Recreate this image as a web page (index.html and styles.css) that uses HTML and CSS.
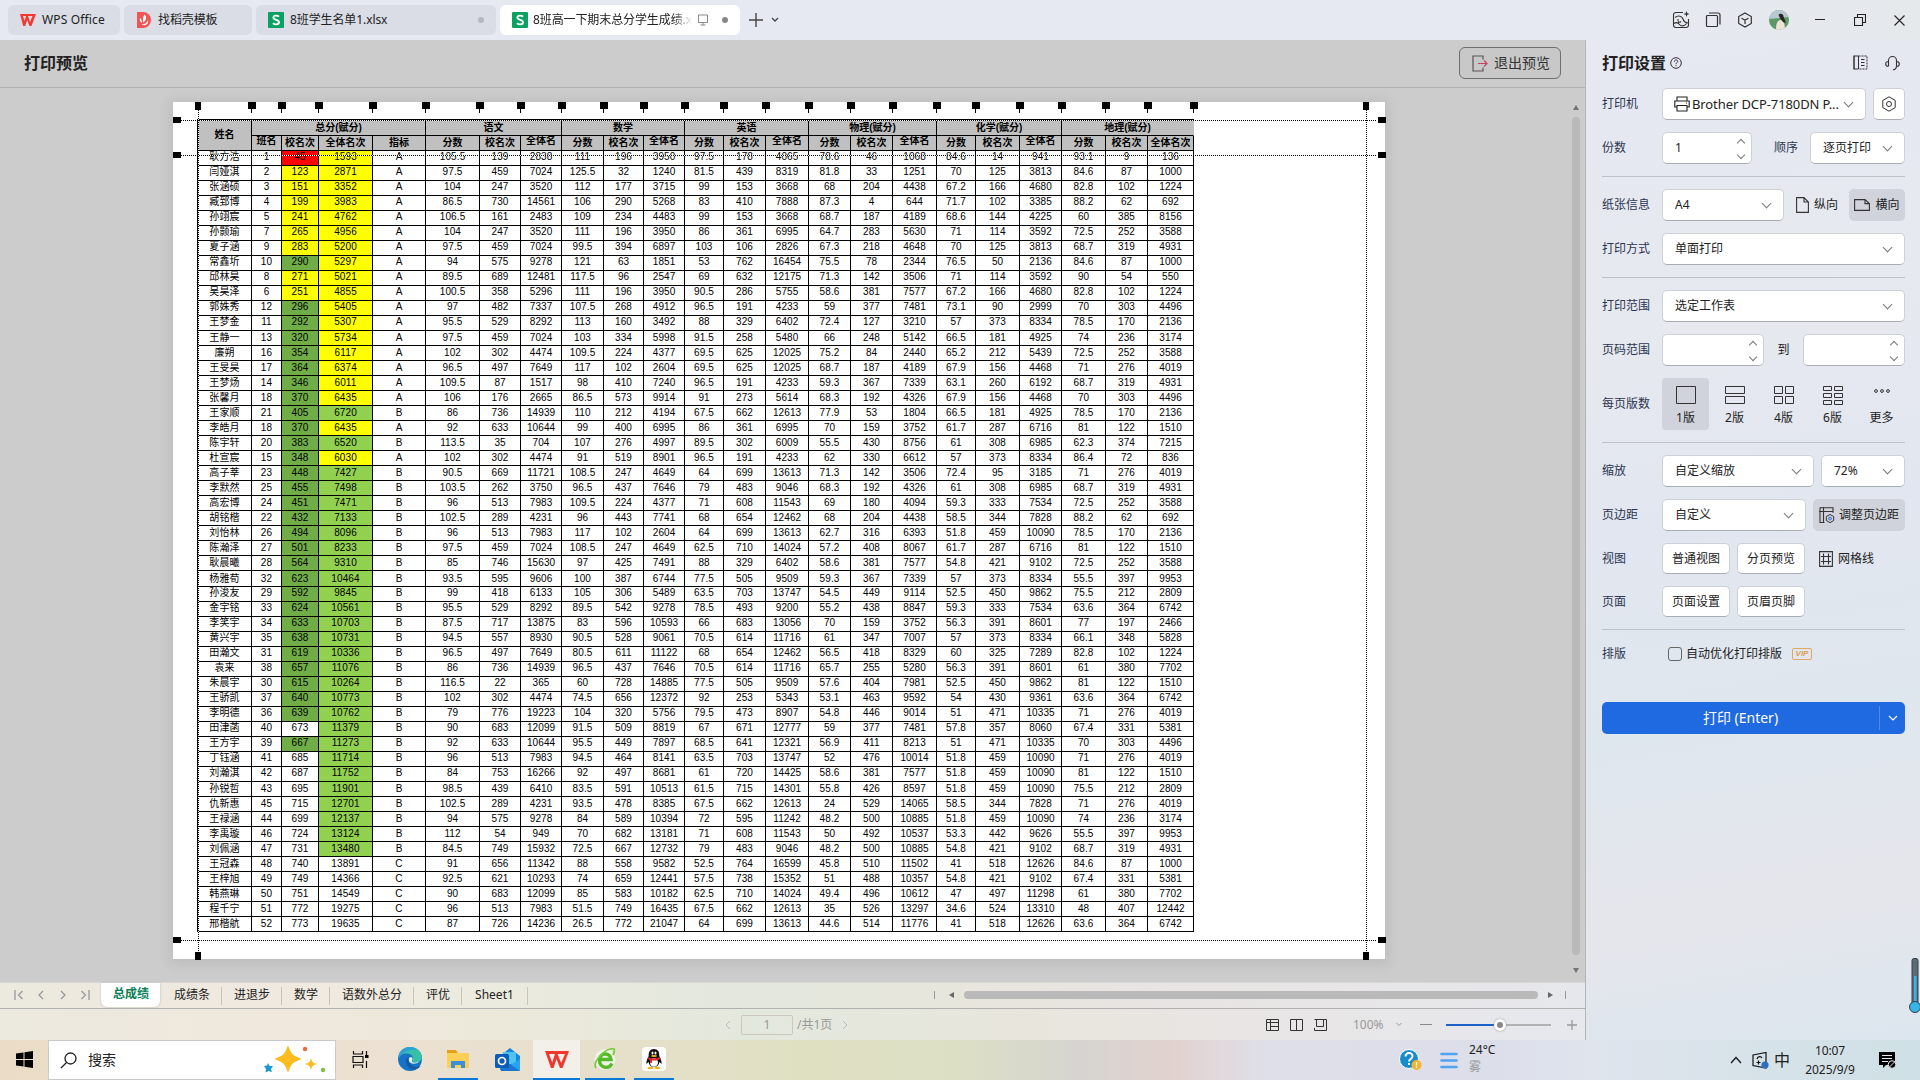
FILE: index.html
```html
<!DOCTYPE html>
<html lang="zh-CN">
<head>
<meta charset="utf-8">
<title>打印预览</title>
<link rel="stylesheet" href="styles.css">
</head>
<body>
<div class="app">
  <header class="titlebar">
    <nav class="doc-tabs">
      <div class="doc-tab tab-home"><svg width="16" height="16" viewBox="0 0 16 16"><path d="M0 2h16l-4.500 12h-2L7.200 8l-2 6h-2L0 2zm3 2l1.500 5L6 4zm5 0l2 6 2.500-6z" fill="#f5392f"/></svg><span>WPS Office</span></div>
      <div class="doc-tab tab-tpl"><svg width="14" height="16" viewBox="0 0 14 16"><path d="M0 0h6a8 8 0 010 16H0z" fill="#f15454"/><path d="M7.500 2.500c2.500 2.500 2 6-1.500 8 0-3-.5-5 1.500-8zM3 6c1.500 1 2 2.500 2 5C3 10 2.500 8 3 6zM4 12c3 1 6-1 7-4 1 4-3 7-7 4z" fill="#fff"/></svg><span>找稻壳模板</span></div>
      <div class="doc-tab tab-doc"><svg width="16" height="16" viewBox="0 0 16 16"><rect width="16" height="16" rx="1" fill="#0ba162"/><path d="M11 4.700C9.500 3 5.400 3.200 5.400 5.600 5.400 8.600 11 7.300 11 10.300 11 13 6.500 13 5 11.200" fill="none" stroke="#fff" stroke-width="1.800"/></svg><span class="doc-name">8班学生名单1.xlsx</span><i class="dot"></i></div>
      <div class="doc-tab tab-doc active"><svg width="16" height="16" viewBox="0 0 16 16"><rect width="16" height="16" rx="1" fill="#0ba162"/><path d="M11 4.700C9.500 3 5.400 3.200 5.400 5.600 5.400 8.600 11 7.300 11 10.300 11 13 6.500 13 5 11.200" fill="none" stroke="#fff" stroke-width="1.800"/></svg><span class="doc-name fade">8班高一下期末总分学生成绩.x</span><svg class="monitor" width="12" height="12" viewBox="0 0 12 12"><path d="M1.500 1h9v7.500h-9zM6 8.500V11M3.500 11h5" fill="none" stroke="#888"/></svg><i class="dot dark"></i></div>
      <svg class="plus" width="14" height="14" viewBox="0 0 14 14"><path d="M7 0v14M0 7h14" stroke="#444" stroke-width="1.400"/></svg>
      <svg class="more-tabs" width="8" height="6" viewBox="0 0 8 6"><path d="M1 1l3 3 3-3" fill="none" stroke="#444" stroke-width="1.300"/></svg>
    </nav>
    <div class="win-icons">
      <svg width="18" height="18" viewBox="0 0 18 18"><path d="M11 1.500H4A2.500 2.500 0 001.500 4v10A2.500 2.500 0 004 16.500h10a2.500 2.500 0 002.500-2.500V8M3 6.500C6 4 10 5 11 8c.5 2 2 3.500 5 4M2 12.500c2-1.500 4-1 5.500 1s5 2 7-1M5 9h2M9 10.500c-1 1-2 1-3 0" fill="none" stroke="#333" stroke-width="1.100"/><path d="M14.500 0l.8 2.200L17.500 3l-2.200.8-.8 2.200-.8-2.200L11.500 3l2.200-.8z" fill="#333"/></svg>
      <svg width="16" height="16" viewBox="0 0 16 16"><path d="M1.500 4.500a1 1 0 011-1h9a1 1 0 011 1v9a1 1 0 01-1 1h-9a1 1 0 01-1-1zM4 1h9a2 2 0 012 2v9.500" fill="none" stroke="#333" stroke-width="1.200"/></svg>
      <svg width="16" height="16" viewBox="0 0 16 16"><path d="M8 1l6.300 3.500v7L8 15l-6.300-3.500v-7zM4.500 6.200L8 8.100l3.500-1.900M8 8v4" fill="none" stroke="#333" stroke-width="1.200"/></svg>
      <svg width="20" height="20" viewBox="0 0 20 20"><defs><clipPath id="av"><circle cx="10" cy="10" r="10"/></clipPath></defs><g clip-path="url(#av)"><path d="M0 0h20v20H0z" fill="#5b9a65"/><path d="M0 0h20v7L0 9z" fill="#b8c8d2"/><path d="M7 20c0-6 1-9 4-10 3 0 5 3 5 10z" fill="#efe3d8"/><path d="M9.500 5c1-2 5-2 5 1.500l2.500 6.500-3-1-3-4z" fill="#2b2522"/></g></svg>
      <svg width="10" height="16" viewBox="0 0 10 16"><path d="M0 7.500h10" stroke="#222"/></svg>
      <svg width="12" height="12" viewBox="0 0 12 12"><path d="M.5 3.500h8v8h-8zM3.500 3.500v-3h8v8h-3" fill="none" stroke="#222" stroke-width="1.100"/></svg>
      <svg width="11" height="11" viewBox="0 0 11 11"><path d="M.5.500l10 10M10.500.500l-10 10" stroke="#222" stroke-width="1.100"/></svg>
    </div>
  </header>

  <div class="work">
    <main class="preview">
      <div class="preview-head">
        <h1>打印预览</h1>
        <button class="exit"><svg width="16" height="17" viewBox="0 0 16 17"><path d="M11 4.500V1H1v15h10v-3.500" fill="none" stroke="#555" stroke-width="1.200"/><path d="M6 8.500h9M12 5.500l3 3-3 3" fill="none" stroke="#c9405c" stroke-width="1.200"/></svg>退出预览</button>
      </div>
      <div class="canvas">
        <div class="sheet" id="sheet">
          <table class="scores">
            <colgroup id="cols"></colgroup>
            <thead>
              <tr class="groups"><th rowspan="2">姓名</th><th colspan="4">总分(赋分)</th><th colspan="3">语文</th><th colspan="3">数学</th><th colspan="3">英语</th><th colspan="3">物理(赋分)</th><th colspan="3">化学(赋分)</th><th colspan="3" class="open">地理(赋分)</th></tr>
              <tr><th class="up">班名</th><th>校名次</th><th>全体名次</th><th>指标</th><th>分数</th><th>校名次</th><th class="up">全体名</th><th>分数</th><th>校名次</th><th class="up">全体名</th><th>分数</th><th>校名次</th><th class="up">全体名</th><th>分数</th><th>校名次</th><th class="up">全体名</th><th>分数</th><th>校名次</th><th class="up">全体名</th><th>分数</th><th>校名次</th><th>全体名次</th></tr>
            </thead>
            <tbody id="rows"></tbody>
          </table>
          <i class="guide h g-top"></i><i class="guide h g-head"></i><i class="guide h g-bottom"></i>
          <i class="guide v g-left"></i><i class="guide v g-right"></i>
        </div>
        <div class="vscroll"><i class="arr up-arr"></i><i class="vthumb"></i><i class="arr down-arr"></i></div>
      </div>
      <div class="sheetbar">
        <div class="sheet-nav">
          <svg width="10" height="10" viewBox="0 0 10 10"><path d="M1 0v10M8.500 1L4.500 5l4 4"/></svg>
          <svg width="10" height="10" viewBox="0 0 10 10"><path d="M7 1L3 5l4 4"/></svg>
          <svg width="10" height="10" viewBox="0 0 10 10"><path d="M3 1l4 4-4 4"/></svg>
          <svg width="10" height="10" viewBox="0 0 10 10"><path d="M9 0v10M1.500 1l4 4-4 4"/></svg>
        </div>
        <span class="stab on">总成绩</span><span class="stab">成绩条</span><span class="stab">进退步</span><span class="stab">数学</span><span class="stab">语数外总分</span><span class="stab">评优</span><span class="stab wide">Sheet1</span>
        <div class="hscroll"><i class="tick"></i><i class="arr left-arr"></i><i class="hthumb"></i><i class="arr right-arr"></i><i class="tick"></i></div>
      </div>
      <div class="statusbar">
        <div class="pager"><svg width="6" height="10" viewBox="0 0 6 10"><path d="M5 1L1 5l4 4" fill="none" stroke="#bbb"/></svg><span class="page-no">1</span><span>/共1页</span><svg width="6" height="10" viewBox="0 0 6 10"><path d="M1 1l4 4-4 4" fill="none" stroke="#bbb"/></svg></div>
        <div class="views">
          <svg width="13" height="12" viewBox="0 0 13 12"><path d="M.5.500h12v11H.5zM.5 3.500h12M4.500 .5v11M4.500 7.500h8" fill="none" stroke="#333"/></svg>
          <svg width="13" height="12" viewBox="0 0 13 12"><path d="M.5.500h12v11H.5zM6.500.500v11M5 .5h3" fill="none" stroke="#333"/></svg>
          <svg width="13" height="12" viewBox="0 0 13 12"><path d="M.5.500h12v11H.5M2.500.500v7h7V.5M.5 9v2.500" fill="none" stroke="#333"/></svg>
        </div>
        <div class="zoomer"><span class="pct">100%</span><svg width="6" height="5" viewBox="0 0 6 5"><path d="M.5 1L3 3.500 5.500 1" fill="none" stroke="#999"/></svg><i class="minus"></i><span class="track"><i class="fill"></i><i class="knob"></i></span><svg width="10" height="10" viewBox="0 0 10 10"><path d="M5 0v10M0 5h10" stroke="#999" stroke-width="1.300"/></svg></div>
      </div>
    </main>

    <aside class="settings">
      <div class="set-head"><h2>打印设置</h2><svg width="12" height="12" viewBox="0 0 12 12"><circle cx="6" cy="6" r="5.300" fill="none" stroke="#333"/><path d="M4.400 4.700c0-2.200 3.300-2.200 3.300-.2C7.700 5.800 6 5.700 6 7.100M6 8.200v1" fill="none" stroke="#333"/></svg>
        <span class="set-tools"><svg width="15" height="15" viewBox="0 0 15 15"><path d="M5.500 1H1v13h4.500zM1 .5v14" fill="none" stroke="#333"/><path d="M5.500 1H14v13H5.500" fill="none" stroke="#333" stroke-dasharray="2 1"/><path d="M8 4.500h3.500M8 7.500h3.500M8 10.500h3.500" stroke="#333"/></svg><svg width="15" height="16" viewBox="0 0 15 16"><path d="M3.500 11V5.500a4 4 0 018 0v5.500c0 2-1 3.500-3.500 4M3.500 6.500C1.500 6.500.7 7.500.7 9s.8 2.500 2.800 2.500M11.500 6.500c2 0 2.800 1 2.800 2.500s-.8 2.500-2.800 2.500" fill="none" stroke="#333" stroke-width="1.100"/></svg></span></div>
      <div class="row"><label>打印机</label><div class="box select grow printer"><svg class="lead" width="16" height="16" viewBox="0 0 16 16"><path d="M3 5V1h10v4M3 11H.8V5h14.400v6H13M3 9.500h10V15H3zM12 7h1" fill="none" stroke="#222" stroke-width="1.100"/></svg><span>Brother DCP-7180DN P...</span><i class="chev"></i></div><div class="box gear"><svg width="16" height="16" viewBox="0 0 16 16"><path d="M8 .8l6.200 3.600v7.200L8 15.200l-6.200-3.600V4.400z" fill="none" stroke="#333"/><circle cx="8" cy="8" r="2.500" fill="none" stroke="#333"/></svg></div></div>
      <div class="row last"><label>份数</label><div class="box w89 spin-box"><span>1</span><i class="spin"></i></div><label class="mid order">顺序</label><div class="box select w95"><span>逐页打印</span><i class="chev"></i></div></div>
      <hr>
      <div class="row"><label>纸张信息</label><div class="box select w121"><span>A4</span><i class="chev"></i></div><span class="flat portrait"><svg width="13" height="16" viewBox="0 0 13 16"><path d="M.6.600h7.400l4.400 4.400v10.400H.6zM8 .6V5h4.400" fill="none" stroke="#333" stroke-width="1.100"/></svg>纵向</span><span class="flat sel w56"><svg width="16" height="12" viewBox="0 0 16 12"><path d="M.6.600h10.400l4.400 4v6.800H.6zM11 .6v4h4.400" fill="none" stroke="#333" stroke-width="1.100"/></svg>横向</span></div>
      <div class="row last"><label>打印方式</label><div class="box select grow"><span>单面打印</span><i class="chev"></i></div></div>
      <hr>
      <div class="row"><label>打印范围</label><div class="box select grow"><span>选定工作表</span><i class="chev"></i></div></div>
      <div class="row"><label>页码范围</label><div class="box w102 spin-box"><i class="spin"></i></div><label class="mid to">到</label><div class="box w102 spin-box"><i class="spin"></i></div></div>
      <div class="row tall last"><label>每页版数</label>
        <div class="ups">
          <span class="up-opt sel"><svg width="20" height="20" viewBox="0 0 20 20"><path d="M.5 1.500h19v17H.5z"/></svg>1版</span>
          <span class="up-opt"><svg width="20" height="20" viewBox="0 0 20 20"><path d="M.5 1.500h19v7H.5zM.5 11.500h19v7H.5z"/></svg>2版</span>
          <span class="up-opt"><svg width="20" height="20" viewBox="0 0 20 20"><path d="M.5 1.500h8v7h-8zM11.500 1.500h8v7h-8zM.5 11.500h8v7h-8zM11.500 11.500h8v7h-8z"/></svg>4版</span>
          <span class="up-opt"><svg width="20" height="20" viewBox="0 0 20 20"><path d="M.5 1.500h8v4h-8zM11.500 1.500h8v4h-8zM.5 8.500h8v4h-8zM11.500 8.500h8v4h-8zM.5 15.500h8v4h-8zM11.500 15.500h8v4h-8z"/></svg>6版</span>
          <span class="up-opt dots"><svg width="20" height="20" viewBox="0 0 20 20"><circle cx="4" cy="6" r="1.400"/><circle cx="10" cy="6" r="1.400"/><circle cx="16" cy="6" r="1.400"/></svg>更多</span>
        </div></div>
      <hr>
      <div class="row"><label>缩放</label><div class="box select grow"><span>自定义缩放</span><i class="chev"></i></div><div class="box select w84"><span>72%</span><i class="chev"></i></div></div>
      <div class="row"><label>页边距</label><div class="box select grow"><span>自定义</span><i class="chev"></i></div><span class="flat sel w92"><svg width="16" height="16" viewBox="0 0 16 16"><path d="M1 .5v15h4.500M1 .8h13v5M4.500 0v16M0 4.500h14" fill="none" stroke="#333" stroke-width="1.100"/><path d="M11 7.500l3.700 2v4L11 15.700l-3.700-2.200v-4z" fill="#cfd3db" stroke="#333"/><circle cx="11" cy="11.600" r="1.500" fill="#8ba6ee" stroke="#3b62c4" stroke-width=".7"/></svg>调整页边距</span></div>
      <div class="row short"><label>视图</label><div class="box btn">普通视图</div><div class="box btn">分页预览</div><span class="flat gridline"><svg width="14" height="16" viewBox="0 0 14 16"><path d="M.6.600h12.800v14.800H.6zM4.500 2.500v11M9.500 2.500v11M2 5.500h10M2 10.500h10" fill="none" stroke="#333" stroke-width="1.100"/></svg>网格线</span></div>
      <div class="row short last"><label>页面</label><div class="box btn">页面设置</div><div class="box btn">页眉页脚</div></div>
      <hr>
      <div class="row opt"><label>排版</label><i class="check"></i><span>自动优化打印排版</span><b class="vip">VIP</b></div>
      <button class="print"><span>打印 (Enter)</span><i class="split"><svg width="10" height="6" viewBox="0 0 10 6"><path d="M1 1l4 4 4-4" fill="none" stroke="#fff" stroke-width="1.200"/></svg></i></button>
      <svg class="thermo" width="12" height="56" viewBox="0 0 12 56"><rect x="3" y=".5" width="6" height="46" rx="2" fill="#5c6b78" stroke="#34404a"/><path d="M5 18h2.500v28H5z" fill="#35b4e8"/><circle cx="6" cy="49" r="5.500" fill="#35b4e8" stroke="#34404a"/></svg>
    </aside>
  </div>

  <footer class="taskbar">
    <div class="start"><svg width="17" height="17" viewBox="0 0 17 17"><path d="M0 2.400l7.500-1V8H0zM8.500 1.200L17 0v8H8.500zM0 9h7.500v6.600L0 14.600zM8.500 9H17v8l-8.500-1.200z"/></svg></div>
    <div class="search"><svg width="17" height="17" viewBox="0 0 17 17"><circle cx="10.500" cy="6.500" r="5.500" fill="none" stroke="#222" stroke-width="1.300"/><path d="M6.500 10.500L1 16" stroke="#222" stroke-width="1.300"/></svg><span>搜索</span>
      <svg class="stars" width="62" height="28" viewBox="0 0 62 28"><path d="M24 1c2 7 4.500 10 12 12-7.500 2-10 5-12 12-2-7-4.500-10-12-12 7.500-2 10-5 12-12z" fill="#fdbc1f" stroke="#fdbc1f" stroke-width="1.500" stroke-linejoin="round"/><path d="M47 12c1 4 2 5 6 6-4 1-5 2-6 6-1-4-2-5-6-6 4-1 5-2 6-6z" fill="#fdbc1f"/><path d="M4 17l1.500 3 3.500 0-2 3 1 3-3.500-1-3 1.500 .5-3.500L0 20l3-.5z" fill="#199ad6"/><circle cx="41" cy="3" r="2.200" fill="#e86a3c"/><circle cx="59" cy="24" r="2.200" fill="#7cc04b"/></svg></div>
    <div class="apps">
      <span class="app-ic"><svg width="17" height="17" viewBox="0 0 17 17"><path d="M1.500 0v3h9V0M1 5.500h10v6H1zM1.500 17v-3h9v3M14.500 0v7M14.500 10v7" fill="none" stroke="#111" stroke-width="1.200"/><path d="M13 4h3.500v3H13z"/></svg></span>
      <span class="app-ic"><svg width="24" height="24" viewBox="0 0 24 24"><circle cx="12" cy="12" r="12" fill="#1673c4"/><path d="M0 12C1 4 6 0 12 0c7 0 12 5 12 10 0 4-4 6-8 5.500-2-.3-2-1.500-1-3 .5-4-3-6-6-6C5 6.500 1 8 0 12z" fill="#37bfa8"/><path d="M0 12C1 4 6 0 12 0c3 0 5 1 7 2.500C13 2 4 5 0 12z" fill="#2aa4d8"/><path d="M9 10c-3 5 0 11 6 12.500 3 .5 6-1 7.500-3.500-5 2.500-11 0-11.500-5z" fill="#125aa3"/><path d="M12.500 10c1.500 0 2.500 1 2 2.500-1 1.500-1 2.700 1 3 2 .4 4 0 5.500-1-2 3-9 3-10-.5-.4-1.500 0-4 1.500-4z" fill="#e7efe8"/></svg></span>
      <span class="app-ic run"><svg width="22" height="20" viewBox="0 0 22 20"><path d="M0 1h9l2 3H0z" fill="#e3a21a"/><path d="M0 4h22v15H0z" fill="#fccf57"/><path d="M4 19v-7h14v7h-4v-3H8v3z" fill="#3d8ed8"/></svg></span>
      <span class="app-ic"><svg width="25" height="23" viewBox="0 0 25 23"><path d="M5 8L15 0l10 8v14H5z" fill="#1687dc"/><path d="M8 4h13v12H8z" fill="#4fc3f0"/><path d="M6 23l19-12v11a1 1 0 01-1 1z" fill="#26a4ee"/><path d="M6 10l19 13H6z" fill="#1a76ce"/><rect y="6" width="14" height="14" rx="1.500" fill="#0f5cb8"/><circle cx="7" cy="13" r="3.500" fill="none" stroke="#fff" stroke-width="1.700"/></svg></span>
      <span class="app-ic run cur"><svg width="24" height="17" viewBox="0 0 24 17"><path d="M0 0h24l-6.500 17H15l-3.500-9-3 9H6L0 0zm4 3l3.200 8.500L10 3zm8.500 0l3.700 9L20 3z" fill="#f2362c"/></svg></span>
      <span class="app-ic run"><svg width="22" height="24" viewBox="0 0 22 24"><circle cx="11" cy="12.500" r="10.500" fill="#eef3e6"/><path d="M18 16.500c-3 6-12 5-12.500-3C5.500 5 16.500 5 17 12.500H6" fill="none" stroke="#55b92c" stroke-width="3.400"/><path d="M2 21C-2 15 12 0 20 2c1 2 0 4-1 6" fill="none" stroke="#77cc3b" stroke-width="1.700"/></svg></span>
      <span class="app-ic run"><svg width="24" height="24" viewBox="0 0 24 24"><rect width="24" height="24" rx="4" fill="#fff"/><path d="M12 2c-4 0-5.500 3-5.300 7C5 12 4 15 4.500 17l2-2c.5 3 2.500 5 5.500 5s5-2 5.500-5l2 2c.5-2-.5-5-2.200-8 .2-4-1.300-7-5.300-7z" fill="#111"/><ellipse cx="12" cy="15.500" rx="4" ry="4.300" fill="#fff"/><path d="M6.500 10c3 2 8 2 11 0l.5 2c-3 2-9 2-12 0z" fill="#e8262b"/><path d="M8 12.500h2V16H8z" fill="#e8262b"/><ellipse cx="10.500" cy="6" rx="1" ry="1.500" fill="#fff"/><ellipse cx="13.500" cy="6" rx="1" ry="1.500" fill="#fff"/><ellipse cx="12" cy="9" rx="3" ry="1" fill="#f6b21b"/><ellipse cx="8.500" cy="21" rx="3" ry="1.200" fill="#f6b21b"/><ellipse cx="15.500" cy="21" rx="3" ry="1.200" fill="#f6b21b"/></svg></span>
    </div>
    <div class="weather">
      <svg width="23" height="22" viewBox="0 0 23 22"><circle cx="10" cy="10" r="9.500" fill="#168ccb" stroke="#fff"/><path d="M6.500 7.500c.3-5 7.500-4.500 7 0-.3 2.500-3.500 2.500-3.500 5M10 14v2" fill="none" stroke="#fff" stroke-width="2"/><circle cx="17.500" cy="16" r="5" fill="#f4b32e"/><path d="M17.500 13v3.500M17.500 17.500v1.500" stroke="#fff" stroke-width="1.300"/></svg>
      <svg class="fog" width="18" height="17" viewBox="0 0 18 17"><path d="M1.500 2h15M1.500 8.500h15M1.500 15h15" stroke="#4fa4f2" stroke-width="2.600" stroke-linecap="round"/></svg>
      <div class="deg"><span>24°C</span><span class="sub">雾</span></div>
    </div>
    <div class="tray">
      <svg class="caret" width="12" height="8" viewBox="0 0 12 8"><path d="M1 7l5-5.500L11 7" fill="none" stroke="#111" stroke-width="1.200"/></svg>
      <svg width="17" height="17" viewBox="0 0 17 17"><path d="M1 3l13-2.500V16L1 13.500zM4.500 10.500h4M6.500 8.500v4M5 7c1-3 4-3 5-1" fill="none" stroke="#111" stroke-width="1.200"/><circle cx="13" cy="13" r="3.600" fill="#2c6fbd"/></svg>
      <span class="ime">中</span>
      <div class="clock"><span>10:07</span><span>2025/9/9</span></div>
      <svg class="notif" width="17" height="17" viewBox="0 0 17 17"><path d="M0 0h16v13h-9l-3 3v-3H0z"/><path d="M3 3.500h10M3 6.500h10M3 9.500h6" stroke="#e3ebee"/><circle cx="13" cy="12.500" r="3.800" stroke="#e3ebee"/><path d="M10.500 15l5-5" stroke="#e3ebee"/></svg>
    </div>
  </footer>
</div>
<script src="table.js"></script>
</body>
</html>
```

FILE: styles.css
```css
* { box-sizing: border-box; }
body { margin: 0; overflow: hidden; font: 12px/16px "Noto Sans", "Noto Sans CJK SC", sans-serif; color: #222; }
i { display: block; font-style: normal; }
svg { display: block; flex: none; }
h1, h2 { margin: 0; }
.app { width: 1920px; height: 1080px; display: flex; flex-direction: column; background: #e6e9f1; }

.titlebar { height: 40px; display: flex; justify-content: space-between; padding: 5px 15px 5px 8px; background: linear-gradient(90deg, #e6e9f2 80%, #e5e9ec); }
.doc-tabs { display: flex; gap: 4px; align-items: center; }
.doc-tab { height: 30px; border-radius: 6px; background: #dadde5; display: flex; align-items: center; padding: 0 12px; white-space: nowrap; }
.doc-tab > span { letter-spacing: -.1px; }
.tab-home { width: 112px; gap: 6px; }
.doc-tab.tab-home > span { letter-spacing: .15px; }
.tab-tpl { width: 128px; padding-left: 13px; gap: 7px; }
.tab-doc { width: 240px; gap: 6px; padding-right: 12px; }
.tab-doc.active { background: #fff; gap: 5px; }
.doc-name { flex: 1; min-width: 0; }
.fade { -webkit-mask-image: linear-gradient(90deg, #000 88%, transparent); mask-image: linear-gradient(90deg, #000 88%, transparent); }
.monitor { margin-right: 8px; }
.dot { width: 6px; height: 6px; border-radius: 50%; background: #b4b7bd; }
.dot.dark { background: #888; }
.plus { margin-left: 5px; }
.more-tabs { margin-left: 4px; }
.win-icons { display: flex; align-items: center; }
.win-icons svg:nth-child(2) { margin-left: 15px; }
.win-icons svg:nth-child(3) { margin-left: 16px; }
.win-icons svg:nth-child(4) { margin-left: 16px; }
.win-icons svg:nth-child(5) { margin-left: 26px; }
.win-icons svg:nth-child(6) { margin-left: 29px; }
.win-icons svg:nth-child(7) { margin-left: 28px; }

.work { height: 1000px; display: flex; }
.preview { width: 1586px; flex: none; border-right: 1px solid #b5b5b8; display: flex; flex-direction: column; background: #ccc; }
.preview-head { height: 48px; border-bottom: 1px solid #b1b1b1; display: flex; align-items: center; justify-content: space-between; padding: 0 24px 1px; }
h1 { font-size: 16px; line-height: 20px; font-weight: 600; }
.exit { width: 102px; height: 32px; border: 1px solid #6e6e6e; border-radius: 6px; background: #c8c8c8; display: flex; align-items: center; gap: 6px; padding: 0 0 0 12px; font: 14px/18px "Noto Sans", "Noto Sans CJK SC", sans-serif; color: #333; white-space: nowrap; }
.canvas { height: 895px; display: flex; justify-content: space-between; padding: 14px 5px 0 173px; overflow: hidden; border-bottom: 1px solid #d8d8d8; }
.sheet { position: relative; width: 1212px; height: 857px; padding: 17px 0 0 24px; background: #fff; box-shadow: 0 2px 12px 4px rgba(0,0,0,.07); }
.scores { border-collapse: separate; border-spacing: 0; table-layout: fixed; width: 997px; border-left: 1px solid #000; border-top: 1px solid #000; font: 10px/12px "Liberation Sans", "Noto Sans CJK SC", sans-serif; color: #000; text-align: center; }
.scores th, .scores td { padding: 0; height: 15px; border-right: 1px solid #000; border-bottom: 1px solid #000; white-space: nowrap; overflow: hidden; }
.scores td { letter-spacing: .1px; }
.scores tr.high td { padding-bottom: 2px; }
.scores th { background: silver; font-weight: 700; }
.scores .groups th { height: 16px; }
.scores th.open { border-right-color: silver; }
.scores th.up { line-height: 10px; padding-bottom: 4px; }
.scores tr.taller td { height: 16px; }
.scores td.red { background: #f00; }
.scores td.yellow { background: #ff0; }
.scores td.green { background: #70ad47; }
.scores td.lime { background: #92d050; }
.guide { position: absolute; }
.guide.h { left: 8px; width: 1196px; height: 1px; background: repeating-linear-gradient(90deg, #000 0 1px, #fff 1px 2px); }
.guide.v { top: 8px; width: 1px; height: 842px; background: repeating-linear-gradient(#000 0 1px, #fff 1px 2px); }
.g-top { top: 18px; }
.g-head { top: 53px; }
.g-bottom { top: 838px; }
.g-left { left: 25px; }
.g-right { left: 1193px; }
.grip { position: absolute; background: #000; }
.grip.col { top: 0; width: 8px; height: 7px; }
.grip.col::after { content: ""; position: absolute; left: 3px; top: 7px; width: 1px; height: 4px; background: #000; }
.grip.mv { width: 6px; height: 8px; }
.grip.mh { width: 8px; height: 6px; }
.vscroll { width: 8px; height: 880px; display: flex; flex-direction: column; align-items: center; }
.vthumb { width: 8px; height: 838px; margin: 7px 0 13px; border-radius: 4px; background: #b9b9b9; }
.arr { width: 0; height: 0; border: 3px solid transparent; flex: none; }
.up-arr { margin-top: 3px; border-width: 0 3px 5px; border-bottom-color: #737373; }
.down-arr { border-width: 5px 3px 0; border-top-color: #737373; }
.left-arr { border-width: 3px 5px 3px 0; border-right-color: #666; }
.right-arr { border-width: 3px 0 3px 5px; border-left-color: #666; }

.sheetbar { height: 26px; display: flex; border-bottom: 1px solid #b1b1b1; background: linear-gradient(90deg, #ece9df, #f0e9df 18%, #ecebdf 30%, #e3e7dd 47%, #e7e6dc 60%, #e8e4e2 72%, #e6e7ec); }
.sheet-nav { width: 101px; display: flex; align-items: center; padding: 0 0 2px 14px; gap: 12px; }
.sheet-nav path { fill: none; stroke: #999; stroke-width: 1.300; }
.stab { padding: 3px 11px 0 12px; height: 24px; position: relative; white-space: nowrap; }
.stab:not(.on) { border-right: 1px solid #c8c5bd; height: 18px; margin-top: 4px; padding-top: 0; }
.stab.on { margin-right: 2px; background: #fff; border-radius: 0 0 6px 6px; color: #0a8055; font-weight: 700; box-shadow: 0 0 2px #aaa; }
.stab.wide { padding: 0 13px; }
.hscroll { margin: 0 19px 0 auto; display: flex; align-items: center; width: 632px; padding-bottom: 1px; }
.tick { width: 1px; height: 8px; background: #999; flex: none; }
.hthumb { width: 574px; height: 8px; border-radius: 4px; background: #b9b9b9; flex: none; }
.left-arr { margin: 0 10px 0 14px; }
.right-arr { margin: 0 12px 0 10px; }
.statusbar { height: 31px; display: flex; align-items: center; color: #999; background: linear-gradient(90deg, #ece9df, #f0e8dd 18%, #ece9da 32%, #e3e8dd 47%, #e8e6dc 65%, #e8e5e4 78%, #e6e8ee); }
.pager { display: flex; align-items: center; width: 545px; padding-left: 725px; box-sizing: content-box; flex: none; }
.page-no { width: 52px; height: 20px; margin: 0 4px 0 10px; border: 1px solid #ccc8c0; border-radius: 2px; text-align: center; line-height: 18px; }
.pager svg:last-child { margin-left: 10px; }
.views { display: flex; gap: 11px; margin-left: -4px; width: 87px; flex: none; }
.zoomer { display: flex; align-items: center; flex: none; }
.pct { width: 43px; }
.minus { width: 12px; height: 1px; margin: 0 14px 0 18px; background: #888; }
.track { position: relative; width: 105px; height: 2px; margin-right: 16px; background: #b2b2b4; }
.fill { width: 53px; height: 2px; background: #1d61c8; }
.knob { position: absolute; left: 48px; top: -5px; width: 12px; height: 12px; border: 3px solid #fff; border-radius: 50%; background: #888; box-shadow: 0 0 2px #888; }

.settings { position: relative; flex: 1; padding: 9px 16px 0; display: flex; flex-direction: column; background: linear-gradient(170deg, #e6e8f2, #e6e9ef 28%, #e2e6f0 48%, #dfe7ee 67%, #e5e6ec 85%, #dce6ee); }
.set-head { height: 28px; display: flex; align-items: center; margin-bottom: 11px; }
h2 { font-size: 16px; line-height: 20px; font-weight: 700; margin-right: 4px; }
.set-tools { margin-left: auto; display: flex; gap: 17px; margin-right: 5px; }
.row { display: flex; align-items: center; height: 32px; margin-bottom: 12px; gap: 7px; white-space: nowrap; }
.row > label:first-child { width: 53px; flex: none; color: #2b3550; }
.row.short { height: 31px; }
.row.tall { height: 52px; }
hr { width: 100%; height: 1px; margin: 0 0 12px; border: 0; background: #bfc2c8; flex: none; }
.box { height: 32px; border: 1px solid #cdd0d7; border-bottom-color: #a9acb2; border-radius: 5px; background: #fff; display: flex; align-items: center; padding: 0 12px; flex: none; }
.row.short .box { height: 31px; }
.box > span { flex: 1; }
.box.grow { flex: 1; }
.printer { padding-left: 11px; }
.printer > span { font-size: 13px; letter-spacing: -.1px; white-space: nowrap; margin-left: 2px; }
.chev { width: 7px; height: 7px; margin: -4px 1px 0 0; border: solid #777; border-width: 0 1px 1px 0; transform: rotate(45deg); flex: none; }
.gear { width: 32px; padding: 0 7px; }
.w84 { width: 84px; } .w89 { width: 90px; } .w95 { width: 95px; } .w102 { width: 102px; } .w121 { width: 122px; }
.spin-box { justify-content: flex-end; padding-right: 7px; }
.spin { width: 6px; height: 22px; display: flex; flex-direction: column; justify-content: space-between; align-items: center; }
.spin::before, .spin::after { content: ""; width: 5px; height: 5px; border: solid #777; border-width: 1px 0 0 1px; transform: translateY(3px) rotate(45deg); }
.spin::after { transform: translateY(-1px) rotate(225deg); }
.mid.order { margin-left: auto; margin-right: 5px; color: #2b3550; }
.mid.to { flex: 1; text-align: center; }
.flat { display: flex; align-items: center; height: 32px; gap: 5px; border-radius: 5px; justify-content: center; }
.flat.sel, .up-opt.sel { background: #d0d3db; }
.portrait { flex: 1; justify-content: flex-start; padding-left: 5px; }
.w56 { width: 56px; } .w92 { width: 92px; gap: 4px; }
.ups { display: flex; gap: 2px; }
.up-opt { width: 47px; height: 52px; border-radius: 4px; display: flex; flex-direction: column; align-items: center; padding-top: 7px; gap: 5px; }
.up-opt path, .up-opt circle { fill: none; stroke: #333; }
.btn { width: 68px; padding: 0; justify-content: center; }
.gridline { margin-left: 7px; }
.row.opt { height: 22px; margin-bottom: 37px; margin-top: 1px; }
.row.opt label { margin-right: 6px; }
.check { width: 14px; height: 14px; border: 1px solid #666; border-radius: 3px; }
.row.opt span { margin-left: -3px; }
.vip { width: 20px; height: 12px; margin-left: 3px; border: 1px solid #e0a860; border-radius: 2px; font: italic 700 8px/10px "Liberation Sans", sans-serif; color: #e0a050; text-align: center; }
.print { height: 32px; border: 0; border-radius: 5px; background: #1f6ae0; color: #fff; display: flex; align-items: center; padding: 0; font: 14px/18px "Noto Sans", "Noto Sans CJK SC", sans-serif; }
.print span { flex: 1; }
.split { width: 26px; height: 24px; border-left: 1px solid #4c8cf0; display: flex; align-items: center; justify-content: center; }
.thermo { position: absolute; right: 0; top: 918px; }

.taskbar { height: 40px; display: flex; align-items: stretch; background: linear-gradient(90deg, #eadcc5, #ece1d2 20%, #e7dfcc 30%, #dfe0c2 42%, #dcdfc4 50%, #d6d4d0 56%, #e1d2cf 61%, #dfdfe9 66%, #dcdeea 77%, #dfe4ed 83%, #cee0e5); }
.start { width: 48px; padding: 11px 0 0 16px; flex: none; }
.search { width: 288px; height: 40px; border: 1px solid #c9c9c9; background: #fff; display: flex; align-items: center; padding: 0 9px 0 11px; font-size: 14px; flex: none; }
.search span { margin-left: 11px; flex: 1; }
.apps { display: flex; flex: none; }
.app-ic { width: 49px; display: flex; align-items: center; justify-content: center; border-bottom: 2px solid transparent; flex: none; }
.app-ic.run { width: 40px; margin: 0 5px 0 4px; border-color: #0a78d6; }
.app-ic.cur { width: 47px; margin: 0 1px; background: #f2f0e9; }
.weather { display: flex; align-items: center; margin-left: 720px; }
.fog { margin: 0 11px 0 18px; }
.deg { display: flex; flex-direction: column; line-height: 17px; padding-bottom: 4px; }
.deg .sub { color: #999; }
.tray { display: flex; align-items: center; margin-left: auto; padding-right: 24px; }
.caret { margin-right: 10px; }
.ime { font-size: 16px; margin: 0 13px 0 5px; }
.clock { width: 54px; display: flex; flex-direction: column; align-items: center; line-height: 19px; margin-right: 22px; letter-spacing: -.1px; }
```

FILE: table.js
```js
// 列宽（像素）：姓名、总分四列，其后每科三列
const widths = [54, 30, 37, 54, 53, 54, 41, 41, 42, 40, 41, 39, 42, 43, 42, 42, 44, 39, 44, 42, 44, 42, 46];
const data = `
耿方浩 1 45 1593 A 105.5 139 2838 111 196 3950 97.5 178 4065 78.6 46 1068 84.6 14 941 93.1 9 136
闫娅淇 2 123 2871 A 97.5 459 7024 125.5 32 1240 81.5 439 8319 81.8 33 1251 70 125 3813 84.6 87 1000
张涵硕 3 151 3352 A 104 247 3520 112 177 3715 99 153 3668 68 204 4438 67.2 166 4680 82.8 102 1224
臧郅博 4 199 3983 A 86.5 730 14561 106 290 5268 83 410 7888 87.3 4 644 71.7 102 3385 88.2 62 692
孙翊宸 5 241 4762 A 106.5 161 2483 109 234 4483 99 153 3668 68.7 187 4189 68.6 144 4225 60 385 8156
孙颢瑜 7 265 4956 A 104 247 3520 111 196 3950 86 361 6995 64.7 283 5630 71 114 3592 72.5 252 3588
夏子涵 9 283 5200 A 97.5 459 7024 99.5 394 6897 103 106 2826 67.3 218 4648 70 125 3813 68.7 319 4931
常鑫圻 10 290 5297 A 94 575 9278 121 63 1851 53 762 16454 75.5 78 2344 76.5 50 2136 84.6 87 1000
邱林昊 8 271 5021 A 89.5 689 12481 117.5 96 2547 69 632 12175 71.3 142 3506 71 114 3592 90 54 550
吴昊泽 6 251 4855 A 100.5 358 5296 111 196 3950 90.5 286 5755 58.6 381 7577 67.2 166 4680 82.8 102 1224
郭姝秀 12 296 5405 A 97 482 7337 107.5 268 4912 96.5 191 4233 59 377 7481 73.1 90 2999 70 303 4496
王梦金 11 292 5307 A 95.5 529 8292 113 160 3492 88 329 6402 72.4 127 3210 57 373 8334 78.5 170 2136
王静一 13 320 5734 A 97.5 459 7024 103 334 5998 91.5 258 5480 66 248 5142 66.5 181 4925 74 236 3174
廉朔 16 354 6117 A 102 302 4474 109.5 224 4377 69.5 625 12025 75.2 84 2440 65.2 212 5439 72.5 252 3588
王旻昊 17 364 6374 A 96.5 497 7649 117 102 2604 69.5 625 12025 68.7 187 4189 67.9 156 4468 71 276 4019
王梦炀 14 346 6011 A 109.5 87 1517 98 410 7240 96.5 191 4233 59.3 367 7339 63.1 260 6192 68.7 319 4931
张馨月 18 370 6435 A 106 176 2665 86.5 573 9914 91 273 5614 68.3 192 4326 67.9 156 4468 70 303 4496
王家顺 21 405 6720 B 86 736 14939 110 212 4194 67.5 662 12613 77.9 53 1804 66.5 181 4925 78.5 170 2136
李皓月 18 370 6435 A 92 633 10644 99 400 6995 86 361 6995 70 159 3752 61.7 287 6716 81 122 1510
陈宇轩 20 383 6520 B 113.5 35 704 107 276 4997 89.5 302 6009 55.5 430 8756 61 308 6985 62.3 374 7215
杜宣宸 15 348 6030 A 102 302 4474 91 519 8901 96.5 191 4233 62 330 6612 57 373 8334 86.4 72 836
高子莘 23 448 7427 B 90.5 669 11721 108.5 247 4649 64 699 13613 71.3 142 3506 72.4 95 3185 71 276 4019
李默然 25 455 7498 B 103.5 262 3750 96.5 437 7646 79 483 9046 68.3 192 4326 61 308 6985 68.7 319 4931
高宏博 24 451 7471 B 96 513 7983 109.5 224 4377 71 608 11543 69 180 4094 59.3 333 7534 72.5 252 3588
胡铭楷 22 432 7133 B 102.5 289 4231 96 443 7741 68 654 12462 68 204 4438 58.5 344 7828 88.2 62 692
刘怡林 26 494 8096 B 96 513 7983 117 102 2604 64 699 13613 62.7 316 6393 51.8 459 10090 78.5 170 2136
陈瀚泽 27 501 8233 B 97.5 459 7024 108.5 247 4649 62.5 710 14024 57.2 408 8067 61.7 287 6716 81 122 1510
耿晨曦 28 564 9310 B 85 746 15630 97 425 7491 88 329 6402 58.6 381 7577 54.8 421 9102 72.5 252 3588
杨雅荀 32 623 10464 B 93.5 595 9606 100 387 6744 77.5 505 9509 59.3 367 7339 57 373 8334 55.5 397 9953
孙浚友 29 592 9845 B 99 418 6133 105 306 5489 63.5 703 13747 54.5 449 9114 52.5 450 9862 75.5 212 2809
金宇铭 33 624 10561 B 95.5 529 8292 89.5 542 9278 78.5 493 9200 55.2 438 8847 59.3 333 7534 63.6 364 6742
李笑宇 34 633 10703 B 87.5 717 13875 83 596 10593 66 683 13056 70 159 3752 56.3 391 8601 77 197 2466
黄兴宇 35 638 10731 B 94.5 557 8930 90.5 528 9061 70.5 614 11716 61 347 7007 57 373 8334 66.1 348 5828
田瀚文 31 619 10336 B 96.5 497 7649 80.5 611 11122 68 654 12462 56.5 418 8329 60 325 7289 82.8 102 1224
袁来 38 657 11076 B 86 736 14939 96.5 437 7646 70.5 614 11716 65.7 255 5280 56.3 391 8601 61 380 7702
朱晨宇 30 615 10264 B 116.5 22 365 60 728 14885 77.5 505 9509 57.6 404 7981 52.5 450 9862 81 122 1510
王骄凯 37 640 10773 B 102 302 4474 74.5 656 12372 92 253 5343 53.1 463 9592 54 430 9361 63.6 364 6742
李明德 36 639 10762 B 79 776 19223 104 320 5756 79.5 473 8907 54.8 446 9014 51 471 10335 71 276 4019
田津菡 40 673 11379 B 90 683 12099 91.5 509 8819 67 671 12777 59 377 7481 57.8 357 8060 67.4 331 5381
王方宇 39 667 11273 B 92 633 10644 95.5 449 7897 68.5 641 12321 56.9 411 8213 51 471 10335 70 303 4496
丁钰涵 41 685 11714 B 96 513 7983 94.5 464 8141 63.5 703 13747 52 476 10014 51.8 459 10090 71 276 4019
刘瀚淇 42 687 11752 B 84 753 16266 92 497 8681 61 720 14425 58.6 381 7577 51.8 459 10090 81 122 1510
孙锐哲 43 695 11901 B 98.5 439 6410 83.5 591 10513 61.5 715 14301 55.8 426 8597 51.8 459 10090 75.5 212 2809
仇新惠 45 715 12701 B 102.5 289 4231 93.5 478 8385 67.5 662 12613 24 529 14065 58.5 344 7828 71 276 4019
王禄涵 44 699 12137 B 94 575 9278 84 589 10394 72 595 11242 48.2 500 10885 51.8 459 10090 74 236 3174
李禹璇 46 724 13124 B 112 54 949 70 682 13181 71 608 11543 50 492 10537 53.3 442 9626 55.5 397 9953
刘佩涵 47 731 13480 B 84.5 749 15932 72.5 667 12732 79 483 9046 48.2 500 10885 54.8 421 9102 68.7 319 4931
王冠森 48 740 13891 C 91 656 11342 88 558 9582 52.5 764 16599 45.8 510 11502 41 518 12626 84.6 87 1000
王梓旭 49 749 14366 C 92.5 621 10293 74 659 12441 57.5 738 15352 51 488 10357 54.8 421 9102 67.4 331 5381
韩燕琳 50 751 14549 C 90 683 12099 85 583 10182 62.5 710 14024 49.4 496 10612 47 497 11298 61 380 7702
程千宁 51 772 19275 C 96 513 7983 51.5 749 16435 67.5 662 12613 35 526 13297 34.6 524 13310 48 407 12442
邢楷航 52 773 19635 C 87 726 14236 26.5 772 21047 64 699 13613 44.6 514 11776 41 518 12626 63.6 364 6742
`.trim().split('\n').map(line => line.split(' '));

// 名次分档底色
const schoolBand = n => n < 100 ? 'red' : n < 290 ? 'yellow' : n < 670 ? 'green' : '';
const overallBand = n => n < 6500 ? 'yellow' : n < 13500 ? 'lime' : '';
// 行高取整后，文字偏上一像素的行段；第 29 行高 16 像素
const rowClass = r => r < 12 || (r > 28 && r < 42) ? 'high' : r === 28 ? 'taller' : '';

document.getElementById('cols').innerHTML = widths.map(w => `<col style="width:${w}px">`).join('');
document.getElementById('rows').innerHTML = data.map((cells, r) =>
  `<tr class="${rowClass(r)}">` + cells.map((v, c) => {
    const band = c === 2 ? schoolBand(+v) : c === 3 ? overallBand(+v) : '';
    return `<td${band ? ` class="${band}"` : ''}>${v}</td>`;
  }).join('') + '</tr>').join('');

// 列宽与页边距拖动柄
const sheet = document.getElementById('sheet');
const grip = (cls, x, y) => {
  const el = document.createElement('i');
  el.className = 'grip ' + cls;
  el.style.left = x + 'px';
  el.style.top = y + 'px';
  sheet.append(el);
};
let edge = 24;
widths.forEach(w => { edge += w; grip('col', edge - 3, 0); });
[22, 1190].forEach(x => [0, 850].forEach(y => grip('mv', x, y)));
[15, 50, 835].forEach(y => [0, 1205].forEach(x => grip('mh', x, y)));
```
